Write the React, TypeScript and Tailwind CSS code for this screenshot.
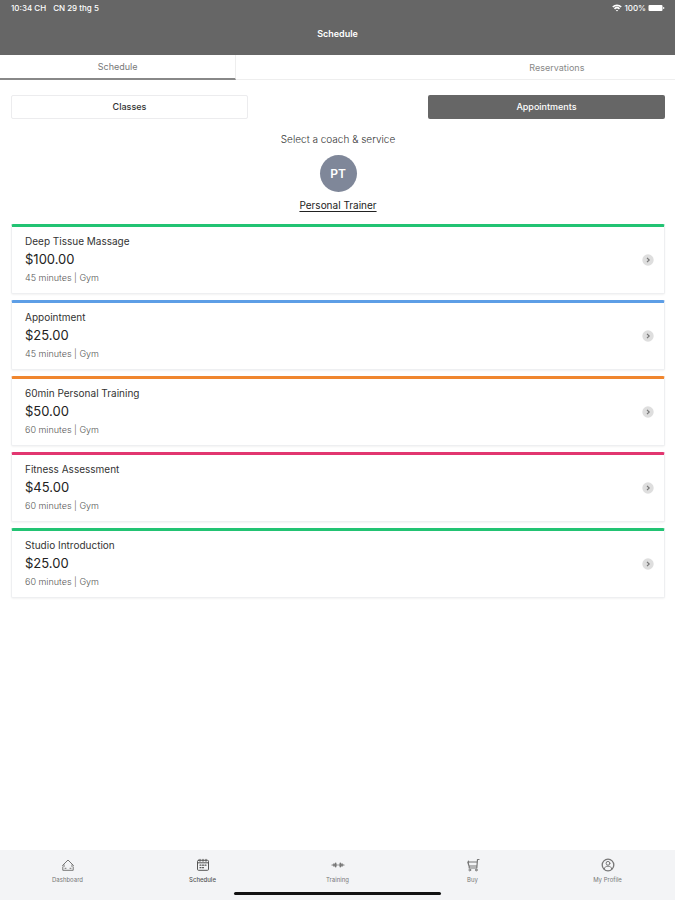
import type { ReactNode } from "react";

type Service = {
  name: string;
  price: string;
  detail: string;
  border: string;
};

const services: Service[] = [
  { name: "Deep Tissue Massage", price: "$100.00", detail: "45 minutes | Gym", border: "border-t-[#22c373]" },
  { name: "Appointment", price: "$25.00", detail: "45 minutes | Gym", border: "border-t-[#5d9ee6]" },
  { name: "60min Personal Training", price: "$50.00", detail: "60 minutes | Gym", border: "border-t-[#f0862e]" },
  { name: "Fitness Assessment", price: "$45.00", detail: "60 minutes | Gym", border: "border-t-[#e23670]" },
  { name: "Studio Introduction", price: "$25.00", detail: "60 minutes | Gym", border: "border-t-[#22c373]" },
];

function Icon({ children }: { children: ReactNode }) {
  return (
    <svg
      viewBox="0 0 14 14"
      className="size-[14px]"
      fill="none"
      stroke="currentColor"
      strokeLinecap="round"
      strokeLinejoin="round"
      aria-hidden="true"
    >
      {children}
    </svg>
  );
}

const navItems: { label: string; active?: boolean; icon: ReactNode }[] = [
  {
    label: "Dashboard",
    icon: (
      <Icon>
        <path d="M1.500 7.500 7 2l5.500 5.500M3 6.800v1.700M11 6.800v1.700M1.800 9v3.300h10.400V9M4 10.300h1M9 10.300h1" />
      </Icon>
    ),
  },
  {
    label: "Schedule",
    active: true,
    icon: (
      <Icon>
        <rect x="1.500" y="2.300" width="11" height="10" rx="1" />
        <path d="M1.500 4.800h11M4 1.300v2M7 1.300v2M10 1.300v2" />
        <path d="M4 7.200h6M4 9.700h4" strokeWidth="1.200" strokeDasharray="1 1.500" />
      </Icon>
    ),
  },
  {
    label: "Training",
    icon: (
      <Icon>
        <path d="M1 7h4M9 7h4" strokeWidth="1.200" />
        <path d="M5 7h4" strokeWidth="0.700" />
        <path d="M3 6v2M4.700 5.200v3.600M9.300 5.200v3.600M11 6v2" strokeWidth="1.500" />
      </Icon>
    ),
  },
  {
    label: "Buy",
    icon: (
      <Icon>
        <path d="M13 1.500h-1.500L10.800 10H3.200M11.200 4H1.800l1.200 4h7.800M2.500 3v2M3.200 8v2" strokeWidth="1.200" />
        <circle cx="3.800" cy="12" r="0.900" />
        <circle cx="10.300" cy="12" r="0.900" />
      </Icon>
    ),
  },
  {
    label: "My Profile",
    icon: (
      <Icon>
        <circle cx="7" cy="7" r="5.800" strokeWidth="1.300" />
        <circle cx="7" cy="5.300" r="1.900" />
        <path d="M3.300 10.800c.4-2 1.800-2.600 3.700-2.600s3.300.6 3.700 2.600" />
      </Icon>
    ),
  },
];

function StatusBar() {
  return (
    <div className="flex h-4 items-center justify-between pr-[10px] pl-[11px] text-[8px] leading-4 font-medium">
      <div className="flex gap-[7px]">
        <span>10:34 CH</span>
        <span>CN 29 thg 5</span>
      </div>
      <div className="flex items-center gap-[2px]">
        <svg viewBox="0 0 10 8" className="h-2 w-[10px]" fill="none" stroke="currentColor" strokeWidth="1.700" aria-hidden="true">
          <path d="M.8 3a6 6 0 0 1 8.400 0M2.500 4.800a3.600 3.600 0 0 1 5 0" />
          <path d="M3.800 6 5 7.500 6.200 6Z" fill="currentColor" stroke="none" />
        </svg>
        <span>100%</span>
        <svg viewBox="0 0 17 8" className="h-2 w-[17px]" fill="currentColor" aria-hidden="true">
          <rect x="0.500" y="1" width="14" height="6" rx="1" />
          <rect x="15.200" y="3" width="1" height="2" />
        </svg>
      </div>
    </div>
  );
}

function ServiceCard({ service }: { service: Service }) {
  return (
    <li>
      <button
        type="button"
        className={`flex h-[70px] w-full items-center justify-between rounded-xs border border-t-3 border-[#eeeff1] bg-white pr-[10px] pl-[13px] text-left shadow-xs ${service.border}`}
      >
        <span className="flex flex-col">
          <span className="text-[10px] leading-4 text-[#333]">{service.name}</span>
          <span className="text-[13px] leading-5 text-[#222]">{service.price}</span>
          <span className="text-[9px] leading-[18px] font-light text-[#555]">{service.detail}</span>
        </span>
        <svg viewBox="0 0 12 12" className="size-3" fill="none" aria-hidden="true">
          <circle cx="6" cy="6" r="5.700" fill="#dedede" />
          <path d="m5 3.800 2.200 2.200L5 8.200" stroke="#777" strokeWidth="1.200" />
        </svg>
      </button>
    </li>
  );
}

export default function App() {
  return (
    <div className="flex min-h-screen flex-col bg-white font-['Inter','Liberation_Sans',sans-serif] text-[#333]">
      <header className="h-[55px] bg-[#666] text-white">
        <StatusBar />
        <h1 className="pt-[10px] text-center text-[9px] leading-4 font-semibold">Schedule</h1>
      </header>

      <nav className="flex h-[25px] justify-between border-b border-[#eee] text-[9px] text-[#777]" aria-label="Views">
        <button type="button" className="h-[25px] w-[35%] border-r border-b-2 border-r-[#eee] border-b-[#888]">
          Schedule
        </button>
        <button type="button" className="h-[25px] w-[35%] text-[#888]">
          Reservations
        </button>
      </nav>

      <main className="flex flex-1 flex-col pt-[15px] pr-[10px] pl-[11px]">
        <div className="flex justify-between text-[9px]">
          <button type="button" className="h-6 w-[237px] rounded-xs border border-[#ececee] font-medium text-[#333]">
            Classes
          </button>
          <button type="button" className="h-6 w-[237px] rounded-xs bg-[#666] font-medium text-white">
            Appointments
          </button>
        </div>

        <section className="flex flex-col items-center pt-3">
          <h2 className="text-[10px] leading-4 font-light text-[#333]">Select a coach &amp; service</h2>
          <div className="mt-2 flex size-[37px] items-center justify-center rounded-full bg-[#7f8799] text-[12px] font-semibold text-white">
            PT
          </div>
          <a href="#trainer" className="mt-1 text-[10px] leading-[18px] text-[#222] underline underline-offset-2">
            Personal Trainer
          </a>
        </section>

        <ul className="mt-[10px] flex flex-col gap-[6px]">
          {services.map((service) => (
            <ServiceCard key={service.name} service={service} />
          ))}
        </ul>
      </main>

      <footer className="bg-[#f3f4f6]">
        <nav className="grid h-[42px] grid-cols-5 pt-2" aria-label="Main">
          {navItems.map((item) => (
            <a
              key={item.label}
              href="#main"
              className={`flex flex-col items-center text-[6px] leading-4 ${item.active ? "font-medium text-[#555]" : "text-[#777]"}`}
            >
              {item.icon}
              {item.label}
            </a>
          ))}
        </nav>
        <div className="mx-auto mb-[5px] h-[3px] w-[207px] rounded-full bg-[#111]" />
      </footer>
    </div>
  );
}
